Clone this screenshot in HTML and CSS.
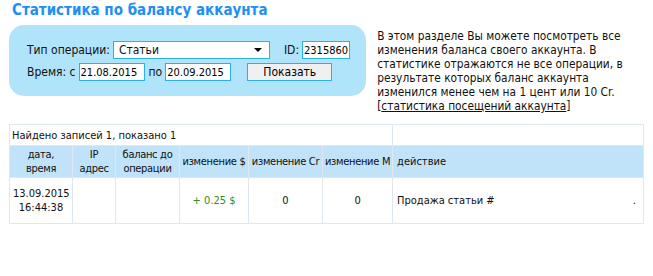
FILE: index.html
```html
<!DOCTYPE html>
<html lang="ru">
<head>
  <meta charset="UTF-8">
  <title>Статистика по балансу аккаунта</title>
  <link rel="stylesheet" href="styles.css">
</head>
<body>
  <div class="page">
    <h1>Статистика по балансу аккаунта</h1>
    <div class="top">
      <form class="filter">
        <div class="row">
          <label>Тип операции:</label>
          <div class="select">Статьи<span class="arrow"></span></div>
          <label class="id-label">ID:</label>
          <input type="text" class="id-input" value="2315860">
        </div>
        <div class="row">
          <label>Время: с</label>
          <input type="text" class="date" value="21.08.2015">
          <label>по</label>
          <input type="text" class="date" value="20.09.2015">
          <button type="button">Показать</button>
        </div>
      </form>
      <p class="info">
        В этом разделе Вы можете посмотреть все изменения баланса своего аккаунта. В статистике отражаются не все операции, в результате которых баланс аккаунта изменился менее чем на 1 цент или 10 Cr.
        [<a href="#">статистика посещений аккаунта</a>]
      </p>
    </div>

    <table class="stats">
      <colgroup>
        <col class="c-date">
        <col class="c-ip">
        <col class="c-bal">
        <col class="c-usd">
        <col class="c-cr">
        <col class="c-m">
        <col>
      </colgroup>
      <tr class="found">
        <td colspan="6">Найдено записей 1, показано 1</td>
        <td></td>
      </tr>
      <tr class="head">
        <th>дата,<br>время</th>
        <th>IP<br>адрес</th>
        <th>баланс до<br>операции</th>
        <th>изменение $</th>
        <th>изменение Cr</th>
        <th>изменение M</th>
        <th class="c-act">действие</th>
      </tr>
      <tr class="data">
        <td>13.09.2015<br>16:44:38</td>
        <td></td>
        <td></td>
        <td class="plus">+ 0.25 $</td>
        <td>0</td>
        <td>0</td>
        <td class="act">Продажа статьи #<span class="dot">.</span></td>
      </tr>
    </table>
  </div>
</body>
</html>
```

FILE: styles.css
```css
body {
  margin: 0;
  font-family: "DejaVu Sans Condensed", "DejaVu Sans", sans-serif;
  font-size: 12px;
  color: #111;
  background: #fff;
}
.page {
  padding: 0 10px 0 9px;
}
h1 {
  margin: 0;
  padding: 1px 0 0 3px;
  height: 24px;
  font-size: 15px;
  color: #1e8ff5;
}
.top {
  display: flex;
  align-items: flex-start;
}
.filter {
  width: 342px;
  height: 55px;
  padding: 16px 0 0 18px;
  background-color: #b0e4fb;
  border-radius: 15px;
}
.row {
  display: flex;
  align-items: center;
  height: 18px;
  margin-bottom: 4px;
}
.row label {
  margin-right: 3px;
}
.select {
  position: relative;
  width: 150px;
  height: 16px;
  line-height: 16px;
  padding-left: 5px;
  background: #fff;
  border: 1px solid #29b1ee;
}
.arrow {
  position: absolute;
  right: 7px;
  top: 6px;
  border-left: 4px solid transparent;
  border-right: 4px solid transparent;
  border-top: 4px solid #000;
}
.id-label {
  margin-left: 14px;
}
input[type="text"] {
  height: 16px;
  padding: 0 1px;
  border: 1px solid #29b1ee;
  font-family: inherit;
  font-size: 11px;
  color: #000;
}
.id-input {
  width: 44px;
}
.date {
  width: 62px;
  margin-right: 4px;
}
button {
  height: 18px;
  width: 85px;
  margin-left: 12px;
  padding: 0;
  background-color: #f0f0f0;
  border: 1px solid #29b1ee;
  font-family: inherit;
  font-size: 12px;
  color: #000;
}
.info {
  margin: 4px 0 0 11px;
  width: 268px;
  font-size: 11.8px;
  line-height: 14px;
}
.info a {
  color: #111;
}
.stats {
  width: 635px;
  margin-top: 11px;
  border-collapse: collapse;
  table-layout: fixed;
  font-size: 11px;
}
.stats td, .stats th {
  border: 1px solid #dfe7ef;
  text-align: center;
  font-weight: normal;
  padding: 0 3px;
  white-space: nowrap;
}
.found td {
  height: 20px;
  text-align: left;
  padding-left: 2px;
}
.head th {
  height: 31px;
  background-color: #c0e3f9;
  line-height: 14px;
  letter-spacing: -0.3px;
  padding: 0 1px;
}
.head .c-act {
  text-align: left;
  padding-left: 4px;
  letter-spacing: 0;
}
.data td {
  height: 45px;
  line-height: 14px;
}
.c-date { width: 63px; }
.c-ip { width: 43px; }
.c-bal { width: 64px; }
.c-usd { width: 69px; }
.c-cr { width: 74px; }
.c-m { width: 70px; }
.data .act {
  text-align: left;
  padding-left: 4px;
  position: relative;
}
.plus {
  color: #2f8f1f;
}
.dot {
  position: absolute;
  right: 7px;
}
```
